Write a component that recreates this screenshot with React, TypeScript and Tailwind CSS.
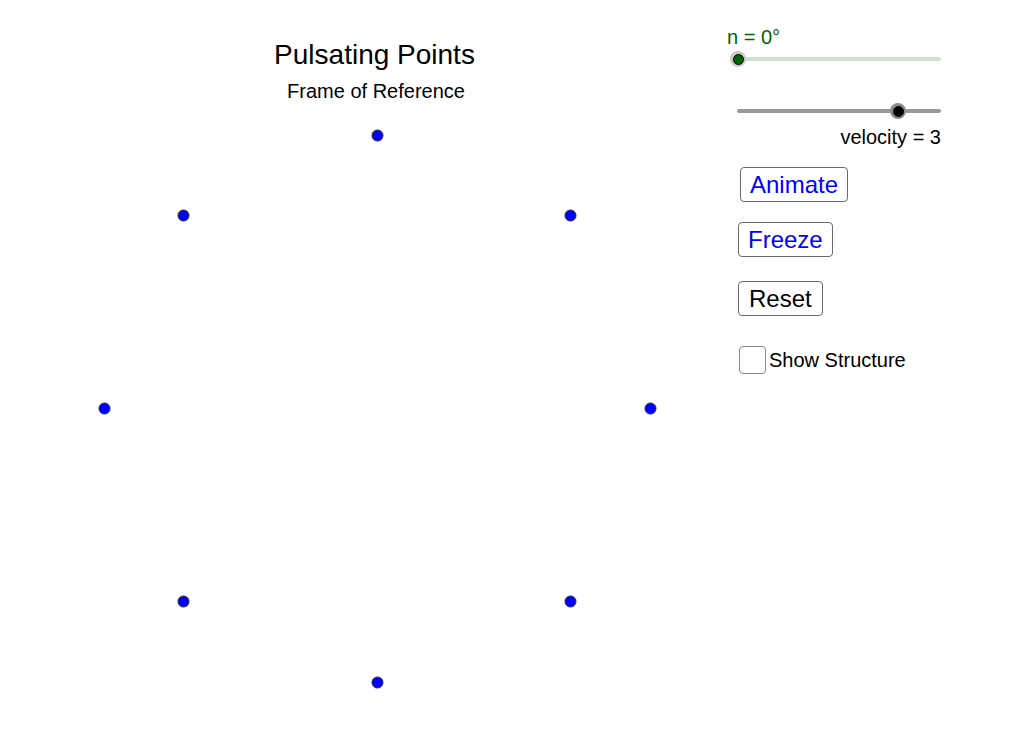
const points = [
  [377, 135],
  [183, 215],
  [570, 215],
  [104, 408],
  [650, 408],
  [183, 601],
  [570, 601],
  [377, 682],
]

function Slider({ track, knob, halo, pos }: { track: string; knob: string; halo: string; pos: number }) {
  return (
    <div className="relative ml-[10px] flex h-4 w-[204px] items-center">
      <div className={`h-[4px] w-full rounded-full ${track}`} />
      <div
        className={`absolute top-0 flex h-4 w-4 items-center justify-center rounded-full ${halo}`}
        style={{ left: pos - 8 }}
      >
        <div className={`h-[11px] w-[11px] rounded-full border border-black ${knob}`} />
      </div>
    </div>
  )
}

export default function App() {
  return (
    <div className="relative h-[737px] w-[1024px] overflow-hidden bg-white font-['Liberation_Sans',Arial,sans-serif] text-black">
      {/* points on the graphics view */}
      <svg className="absolute inset-0" width={1024} height={737}>
        {points.map(([x, y], i) => (
          <circle key={i} cx={x + 0.5} cy={y + 0.5} r={5.5} fill="#0000ff" stroke="#2a2a2a" strokeWidth={1} />
        ))}
      </svg>

      <div className="relative flex">
        {/* Title */}
        <div className="w-[727px] pl-[22px] pt-[41px] text-center">
          <h1 className="text-[28px] leading-none">Pulsating Points</h1>
          <p className="mt-[12px] pl-[3px] text-[20px] leading-none">Frame of Reference</p>
        </div>

        {/* Controls */}
        <div className="flex w-[230px] flex-col items-start pt-[27px]">
          <span className="text-[20px] leading-none text-[#006400]">n = 0°</span>
          <div className="mt-[4px]">
            <Slider track="bg-[#cfdfd0]" knob="bg-[#006400]" halo="bg-[#c8c8c8]" pos={1} />
          </div>
          <div className="mt-[36px]">
            <Slider track="bg-[#999999]" knob="bg-black" halo="bg-[#8c8c8c]" pos={161} />
          </div>
          <span className="mt-[8px] w-[214px] text-right text-[20px] leading-none">velocity = 3</span>

          <button className="ml-[13px] mt-[20px] h-[35px] rounded-[4px] border border-[#6a6a6a] px-[9px] text-[24px] leading-none text-[#0000ff]">
            Animate
          </button>
          <button className="ml-[11px] mt-[20px] h-[35px] rounded-[4px] border border-[#6a6a6a] px-[9px] text-[24px] leading-none text-[#0000ff]">
            Freeze
          </button>
          <button className="ml-[11px] mt-[24px] h-[35px] rounded-[4px] border border-[#6a6a6a] px-[10px] text-[24px] leading-none">
            Reset
          </button>

          <label className="ml-[12px] mt-[30px] flex items-center gap-[3px]">
            <span className="h-[28px] w-[27px] rounded-[4px] border border-[#8a8a8a] bg-white" />
            <span className="text-[20px] leading-none">Show Structure</span>
          </label>
        </div>
      </div>
    </div>
  )
}
